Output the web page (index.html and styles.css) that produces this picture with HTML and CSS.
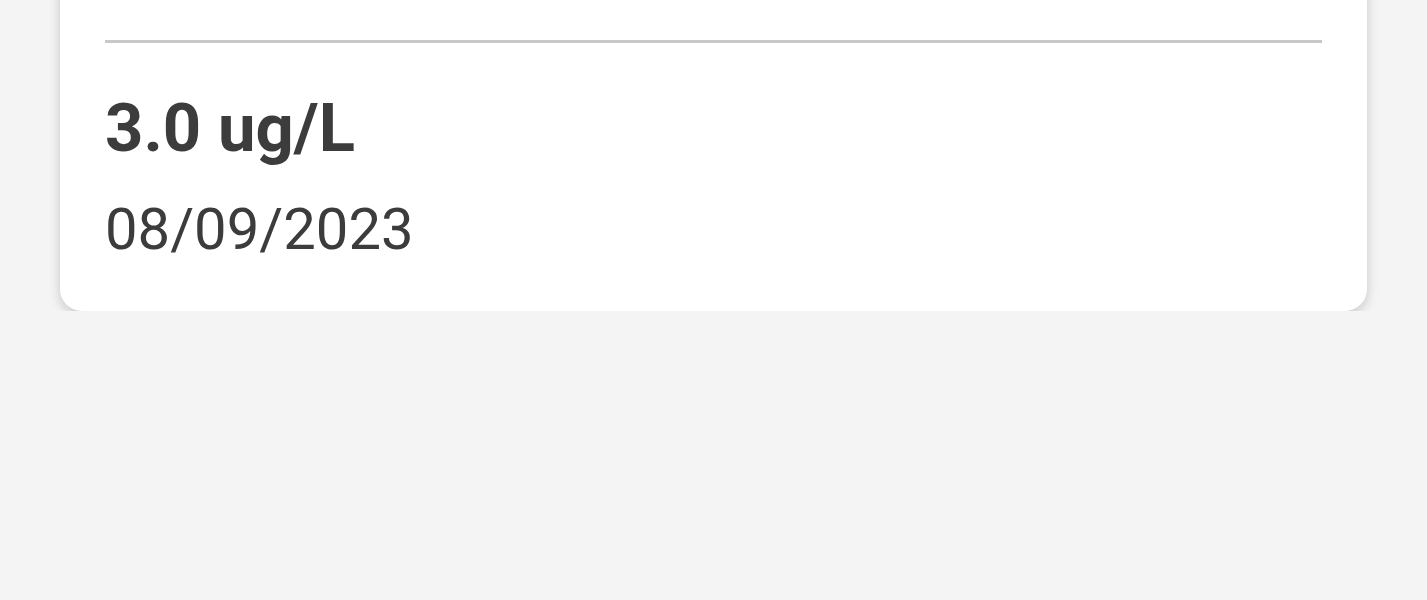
FILE: index.html
```html
<!DOCTYPE html>
<html>
<head>
<meta charset="utf-8">
<link rel="stylesheet" href="styles.css">
</head>
<body>
<div class="card">
  <div class="card-top"></div>
  <hr class="divider">
  <div class="reading">
    <div class="value">3.0 ug/L</div>
    <div class="date">08/09/2023</div>
  </div>
</div>
</body>
</html>
```
FILE: styles.css
```css
html, body {
  margin: 0;
  padding: 0;
  background: #f4f4f4;
  font-family: Roboto, "Noto Sans", sans-serif;
  color: #3c3c3c;
}
.card {
  margin: -40px 60px 0 60px;
  background: #ffffff;
  border-radius: 22px;
  box-shadow: 0 4px 12px rgba(0,0,0,0.18);
  padding: 0 45px 0 45px;
  height: 351px;
  box-sizing: border-box;
  display: flex;
  flex-direction: column;
}
.card-top {
  height: 80px;
}
.divider {
  margin: 0;
  border: none;
  height: 3px;
  background: #c8c8c8;
}
.reading {
  padding-top: 45px;
}
.value {
  font-size: 67px;
  font-weight: 700;
  line-height: 80px;
}
.date {
  font-size: 58px;
  font-weight: 400;
  line-height: 70px;
  margin-top: 26px;
}
```
